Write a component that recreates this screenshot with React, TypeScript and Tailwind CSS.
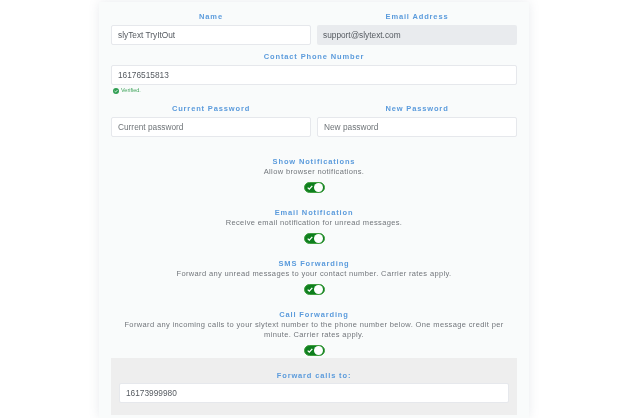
import React from 'react';

const labelClass = 'block text-center text-[7.5px] leading-[10px] font-bold tracking-[0.85px] text-[#5b9bdc]';
const inputClass =
  'h-[20px] w-full rounded-[2px] border border-[#e6e8ec] bg-white px-[6px] text-[8.3px] text-[#555a60] placeholder:text-[#6f7478] outline-none';

function Field({ label, value, placeholder, disabled }: { label: string; value?: string; placeholder?: string; disabled?: boolean }) {
  return (
    <div className="flex min-w-0 flex-1 flex-col gap-[3px]">
      <label className={labelClass}>{label}</label>
      <input
        readOnly
        value={value}
        placeholder={placeholder}
        className={
          disabled
            ? 'h-[20px] w-full rounded-[2px] bg-[#e9ebee] px-[6px] text-[8.3px] text-[#555a60] outline-none'
            : inputClass
        }
      />
    </div>
  );
}

function Toggle() {
  return (
    <div className="mx-auto flex h-[11px] w-[21px] items-center justify-between rounded-full border border-[#3f9e3f] bg-[#0f7f1e] pr-[0.5px] pl-[2.5px]">
      <svg width="6" height="5" viewBox="0 0 6 5" fill="none">
        <path d="M0.7 2.6L2.3 4.1L5.3 0.9" stroke="white" strokeWidth="1.3" />
      </svg>
      <span className="h-[9.5px] w-[9.5px] rounded-full bg-white" />
    </div>
  );
}

function Setting({ title, children, className }: { title: string; children: React.ReactNode; className: string }) {
  return (
    <div className={className}>
      <label className={labelClass}>{title}</label>
      <p className="text-center text-[7.5px] leading-[10px] tracking-[0.36px] text-[#72767b]">{children}</p>
      <div className="mt-[5px]">
        <Toggle />
      </div>
    </div>
  );
}

export default function App() {
  return (
    <div className="h-[418px] w-[637px] overflow-hidden bg-white font-['Liberation_Sans',Arial,sans-serif] blur-[0.3px]">
      <div className="mt-[2px] ml-[99px] h-[416px] w-[430px] bg-[#f9fbfb] px-[12px] pt-[10px] shadow-[0_0_10px_rgba(120,130,150,0.16)]">
        <div className="flex gap-[6px]">
          <Field label="Name" value="slyText TryItOut" />
          <Field label="Email Address" value="support@slytext.com" disabled />
        </div>
        <div className="mt-[7px]">
          <Field label="Contact Phone Number" value="16176515813" />
        </div>
        <div className="mt-[2px] ml-[2px] flex h-[7px] items-center gap-[2px] text-[5.5px] text-[#3fa45b]">
          <svg width="6" height="6" viewBox="0 0 6 6">
            <circle cx="3" cy="3" r="3" fill="#2f9e52" />
            <path d="M1.5 3L2.6 4L4.5 2" stroke="white" strokeWidth="0.8" fill="none" />
          </svg>
          Verified.
        </div>
        <div className="mt-[10px] flex gap-[6px]">
          <Field label="Current Password" placeholder="Current password" />
          <Field label="New Password" placeholder="New password" />
        </div>
        <Setting title="Show Notifications" className="mt-[20px]">
          Allow browser notifications.
        </Setting>
        <Setting title="Email Notification" className="mt-[15px]">
          Receive email notification for unread messages.
        </Setting>
        <Setting title="SMS Forwarding" className="mt-[15px]">
          Forward any unread messages to your contact number. Carrier rates apply.
        </Setting>
        <Setting title="Call Forwarding" className="mt-[15px]">
          Forward any incoming calls to your slytext number to the phone number below. One message credit per
          <br />
          minute. Carrier rates apply.
        </Setting>
        <div className="mt-[2px] flex h-[57px] flex-col gap-[2px] bg-[#eeeeee] px-[8px] pt-[13px]">
          <label className={labelClass}>Forward calls to:</label>
          <input readOnly value="16173999980" className={inputClass} />
        </div>
      </div>
    </div>
  );
}
